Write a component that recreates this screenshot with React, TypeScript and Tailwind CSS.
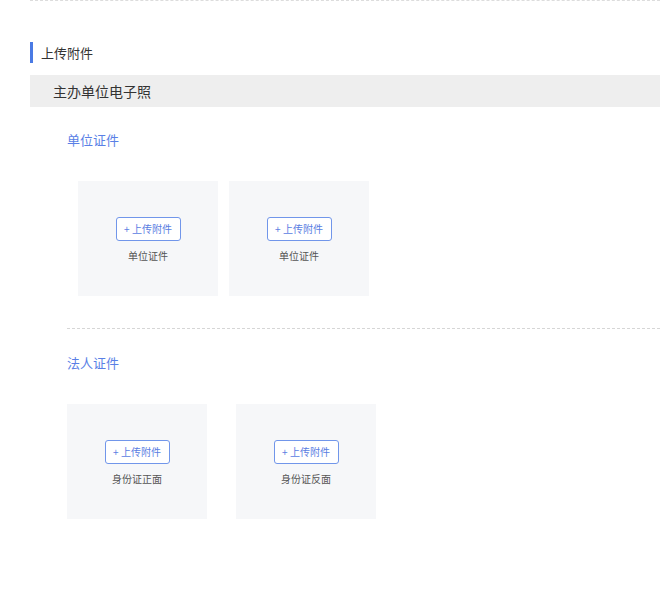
import React from "react"

// ─── Data ─────────────────────────────────────────────────────────────────────

type Slot = { label: string }

const FONT = { fontFamily: '"Noto Sans CJK SC", "Liberation Sans", sans-serif' }

// ─── Upload card ──────────────────────────────────────────────────────────────

function UploadCard({ label }: Slot) {
  return (
    <div className="w-[140px] h-[115px] bg-[#f6f7f9] flex flex-col items-center pt-[36px]">
      <button className="w-[65px] h-[24px] rounded-[3px] border border-[#7196ea] bg-white text-[10px] leading-[22px] text-[#5a7de2] flex items-center justify-center">
        + 上传附件
      </button>
      <div className="mt-[8px] text-[10px] leading-[14px] text-[#555]">{label}</div>
    </div>
  )
}

// ─── Main ─────────────────────────────────────────────────────────────────────

export default function App() {
  return (
    <div className="w-[660px] h-[589px] bg-white text-[#333]" style={FONT}>
      <div className="pt-[1px] ml-[30px] border-t border-dashed border-[#dcdcdc]" />

      {/* Section title */}
      <div className="mt-[40px] ml-[30px] h-[21px] border-l-[3px] border-[#4a7ae4] pl-[8px] text-[13px] leading-[21px]">
        上传附件
      </div>

      {/* Group header */}
      <div className="mt-[12px] ml-[30px] h-[32px] bg-[#eeeeee] pl-[23px] text-[14px] leading-[32px]">
        主办单位电子照
      </div>

      <div className="ml-[67px]">
        <div className="mt-[23px] text-[13px] leading-[20px] text-[#5a7fe6]">单位证件</div>
        <div className="mt-[31px] ml-[11px] flex gap-[11px]">
          <UploadCard label="单位证件" />
          <UploadCard label="单位证件" />
        </div>

        <div className="mt-[32px] border-t border-dashed border-[#d6d6d6]" />

        <div className="mt-[24px] text-[13px] leading-[20px] text-[#5a7fe6]">法人证件</div>
        <div className="mt-[31px] flex gap-[29px]">
          <UploadCard label="身份证正面" />
          <UploadCard label="身份证反面" />
        </div>
      </div>
    </div>
  )
}
